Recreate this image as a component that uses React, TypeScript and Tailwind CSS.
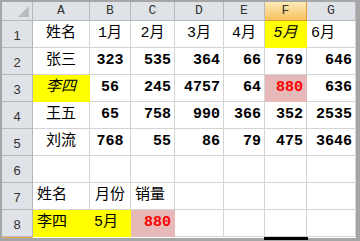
type CellSpec = {
  t?: string
  cls?: string
}

const cjk = "font-['Liberation_Mono','Noto_Sans_CJK_SC',monospace]"
const num = "font-['Liberation_Mono',monospace] font-bold text-[14.5px]"

const C = 'justify-center'
const R = 'justify-end pr-[3px]'
const L = 'justify-start pl-[4px]'
const YEL = 'bg-[#ffff00] border-[#ffff00]'
const PINK = 'bg-[#e6b8b7] border-[#e6b8b7]'

const cols = ['A', 'B', 'C', 'D', 'E', 'F', 'G']

const rows: CellSpec[][] = [
  [
    { t: '姓名', cls: `${cjk} ${C}` },
    { t: '1月', cls: `${cjk} ${C}` },
    { t: '2月', cls: `${cjk} ${C}` },
    { t: '3月', cls: `${cjk} ${C}` },
    { t: '4月', cls: `${cjk} ${C}` },
    { t: '5月', cls: `${cjk} ${C} ${YEL} italic` },
    { t: '6月', cls: `${cjk} ${L}` },
  ],
  [
    { t: '张三', cls: `${cjk} ${C}` },
    { t: '323', cls: `${num} ${C}` },
    { t: '535', cls: `${num} ${R}` },
    { t: '364', cls: `${num} ${R}` },
    { t: '66', cls: `${num} ${R}` },
    { t: '769', cls: `${num} ${R}` },
    { t: '646', cls: `${num} ${R}` },
  ],
  [
    { t: '李四', cls: `${cjk} ${C} ${YEL} italic` },
    { t: '56', cls: `${num} ${C}` },
    { t: '245', cls: `${num} ${R}` },
    { t: '4757', cls: `${num} ${R}` },
    { t: '64', cls: `${num} ${R}` },
    { t: '880', cls: `${num} ${R} ${PINK} text-[#ff0000]` },
    { t: '636', cls: `${num} ${R}` },
  ],
  [
    { t: '王五', cls: `${cjk} ${C}` },
    { t: '65', cls: `${num} ${C}` },
    { t: '758', cls: `${num} ${R}` },
    { t: '990', cls: `${num} ${R}` },
    { t: '366', cls: `${num} ${R}` },
    { t: '352', cls: `${num} ${R}` },
    { t: '2535', cls: `${num} ${R}` },
  ],
  [
    { t: '刘流', cls: `${cjk} ${C}` },
    { t: '768', cls: `${num} ${C}` },
    { t: '55', cls: `${num} ${R}` },
    { t: '86', cls: `${num} ${R}` },
    { t: '79', cls: `${num} ${R}` },
    { t: '475', cls: `${num} ${R}` },
    { t: '3646', cls: `${num} ${R}` },
  ],
  [{}, {}, {}, {}, {}, {}, {}],
  [
    { t: '姓名', cls: `${cjk} ${L}` },
    { t: '月份', cls: `${cjk} ${C}` },
    { t: '销量', cls: `${cjk} ${L}` },
    {},
    {},
    {},
    {},
  ],
  [
    { t: '李四', cls: `${cjk} ${L} ${YEL}` },
    { t: '5月', cls: `${cjk} ${L} ${YEL}` },
    { t: '880', cls: `${num} ${R} ${PINK} text-[#ff0000]` },
    {},
    {},
    {},
    {},
  ],
]

export default function App() {
  return (
    <div className="w-[360px] h-[241px] bg-white overflow-hidden">
      <div className="relative w-[360px] h-[241px] border-t-2 border-l-2 border-r-[4px] border-b-[3px] border-[#a6a6a6] text-black">
        <div className="grid grid-cols-[31px_57px_41px_44px_49px_41px_42px_49px] grid-rows-[19px_repeat(8,27px)_1px]">
          {/* corner */}
          <div className="bg-[#dfe3e8] border-r border-b border-[#b5b9be] flex items-end justify-end pr-[3px] pb-[3px]">
            <svg width="11" height="11" viewBox="0 0 11 11">
              <polygon points="11,0 11,11 0,11" fill="#b8bcc1" />
            </svg>
          </div>
          {cols.map((c) =>
            c === 'F' ? (
              <div
                key={c}
                className="bg-gradient-to-b from-[#fde9b6] to-[#f6c25a] border-r border-b border-[#e39c3a] flex items-center justify-center font-['Liberation_Mono',monospace] text-[13px] text-[#333]"
              >
                {c}
              </div>
            ) : (
              <div
                key={c}
                className="bg-[#dfe3e8] border-r border-b border-[#b5b9be] flex items-center justify-center font-['Liberation_Mono',monospace] text-[13px] text-[#333]"
              >
                {c}
              </div>
            )
          )}
          {rows.map((row, i) => (
            <Row key={i} n={i + 1} cells={row} />
          ))}
          {/* top edge of row 9 */}
          <div className="bg-[#f0a84a]" />
          <div className="col-span-7 bg-white" />
        </div>
        <div className="absolute left-[262px] bottom-[-2px] w-[44px] h-[3px] bg-black" />
      </div>
    </div>
  )
}

function Row({ n, cells }: { n: number; cells: CellSpec[] }) {
  return (
    <>
      <div className="bg-[#dfe3e8] border-r border-b border-[#b5b9be] flex items-end justify-center pb-[2px] font-['Liberation_Sans',sans-serif] text-[13px] text-[#333]">
        {n}
      </div>
      {cells.map((cell, j) => (
        <div
          key={j}
          className={`flex items-center pt-[1px] text-[15px] border-r border-b border-[#d4d4d4] whitespace-nowrap ${cell.cls ?? ''}`}
        >
          {cell.t}
        </div>
      ))}
    </>
  )
}
